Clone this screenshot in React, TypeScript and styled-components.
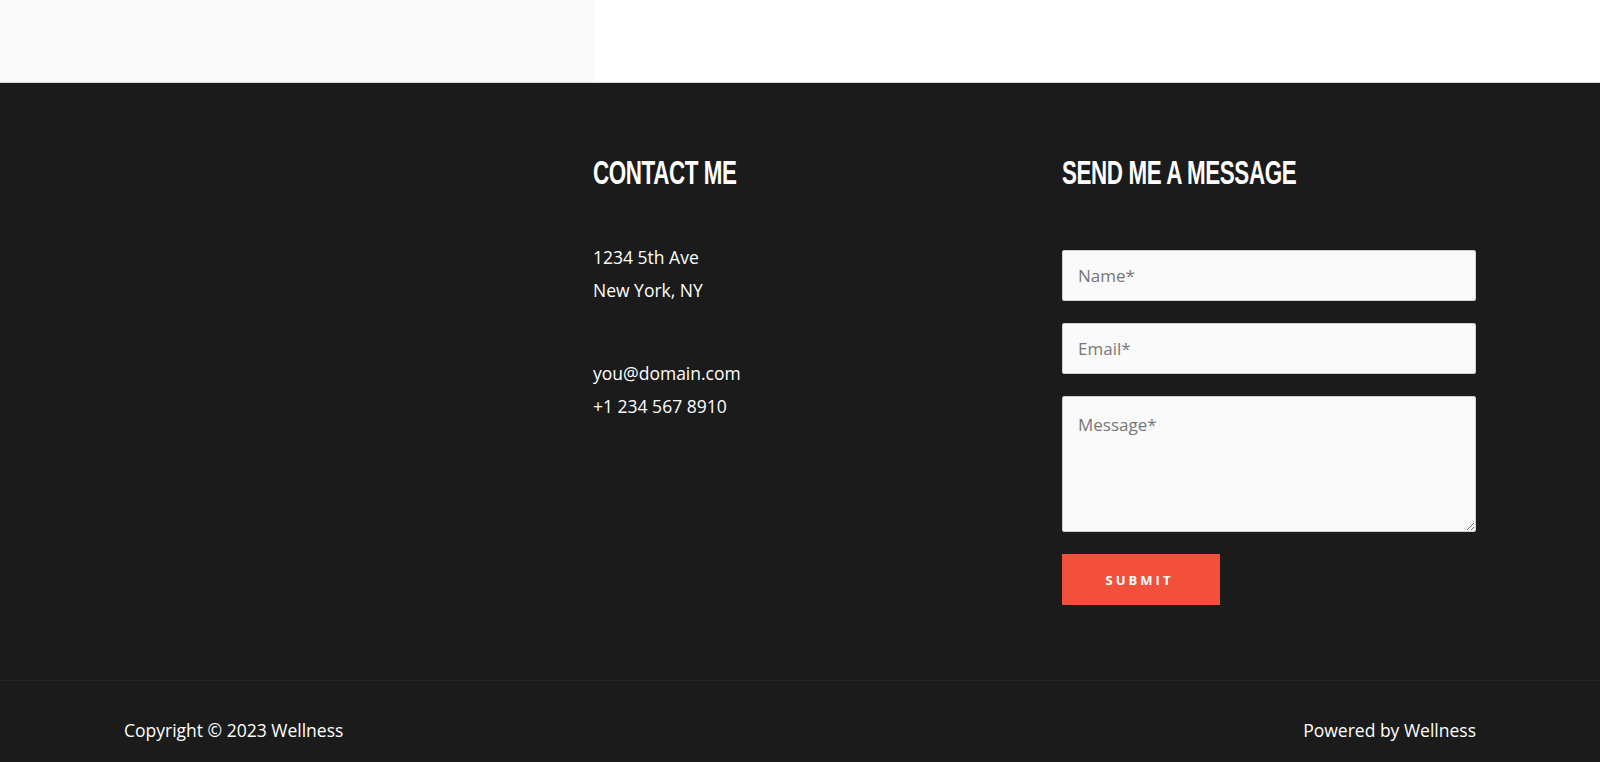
import styled, { createGlobalStyle } from "styled-components";

const GlobalStyle = createGlobalStyle`
  html, body {
    margin: 0;
    padding: 0;
    background: #1b1b1b;
    font-family: "Open Sans", "Noto Sans", sans-serif;
  }
  * {
    box-sizing: border-box;
  }
`;

const TopStrip = styled.div`
  display: flex;
  height: 83px;
  background: #ffffff;
  border-bottom: 1px solid #d8d8d8;
`;

const TopShade = styled.div`
  width: 595px;
  background: #fafafa;
`;

const Footer = styled.footer`
  background: #1b1b1b;
  color: #fff;
`;

const Main = styled.div`
  display: grid;
  grid-template-columns: repeat(3, 414px);
  column-gap: 55px;
  width: 1352px;
  margin: 0 auto;
  padding: 70px 0 75px;
`;

const Column = styled.div`
  display: flex;
  flex-direction: column;
`;

// condensed display heading, squeezed to mimic a narrow face
const Heading = styled.h3<{ $gap: number }>`
  margin: 0 0 ${(p) => p.$gap}px;
  font-family: "Liberation Sans", "Arial", sans-serif;
  font-size: 28px;
  line-height: 34px;
  font-weight: 700;
  letter-spacing: -0.5px;
  text-transform: uppercase;
  color: #fff;
  transform: scale(0.8, 1.2);
  transform-origin: top left;
  white-space: nowrap;
`;

const Lines = styled.p<{ $gap?: number }>`
  margin: 0 0 ${(p) => p.$gap ?? 0}px;
  font-size: 17.5px;
  line-height: 33px;
  color: #fff;
`;

const Form = styled.form`
  display: flex;
  flex-direction: column;
  gap: 22px;
  align-items: flex-start;
  padding-top: 1px;
`;

const Field = styled.input`
  width: 100%;
  height: 51px;
  padding: 0 15px;
  border: 1px solid #cfcfcf;
  border-radius: 2px;
  background: #fafafa;
  font-family: "Open Sans", "Noto Sans", sans-serif;
  font-size: 17px;
  color: #333;
  &::placeholder {
    color: #777;
  }
`;

const Area = styled.textarea`
  width: 100%;
  height: 136px;
  padding: 16px 15px;
  border: 1px solid #cfcfcf;
  border-radius: 2px;
  background: #fafafa;
  font-family: "Open Sans", "Noto Sans", sans-serif;
  font-size: 17px;
  line-height: 24px;
  color: #333;
  &::placeholder {
    color: #777;
  }
`;

const Submit = styled.button`
  width: 158px;
  height: 51px;
  border: none;
  background: #f2503a;
  color: #fff;
  font-family: "Open Sans", "Noto Sans", sans-serif;
  font-size: 13px;
  font-weight: 700;
  letter-spacing: 3px;
  padding-left: 3px;
  text-transform: uppercase;
  cursor: pointer;
`;

const BottomBar = styled.div`
  border-top: 1px solid #242424;
  background: #1b1b1b;
`;

const BottomInner = styled.div`
  display: flex;
  justify-content: space-between;
  width: 1352px;
  margin: 0 auto;
  padding: 33px 0 40px;
  font-size: 17.5px;
  line-height: 32px;
  color: #fff;
`;

export default function App() {
  return (
    <>
      <GlobalStyle />
      <TopStrip>
        <TopShade />
      </TopStrip>
      <Footer>
        <Main>
          <Column />
          <Column>
            <Heading $gap={54}>Contact Me</Heading>
            <Lines $gap={50}>
              1234 5th Ave
              <br />
              New York, NY
            </Lines>
            <Lines>
              you@domain.com
              <br />
              +1 234 567 8910
            </Lines>
          </Column>
          <Column>
            <Heading $gap={62}>Send Me A Message</Heading>
            <Form onSubmit={(e) => e.preventDefault()}>
              <Field type="text" placeholder="Name*" />
              <Field type="email" placeholder="Email*" />
              <Area placeholder="Message*" />
              <Submit type="submit">Submit</Submit>
            </Form>
          </Column>
        </Main>
        <BottomBar>
          <BottomInner>
            <span>Copyright © 2023 Wellness</span>
            <span>Powered by Wellness</span>
          </BottomInner>
        </BottomBar>
      </Footer>
    </>
  );
}
